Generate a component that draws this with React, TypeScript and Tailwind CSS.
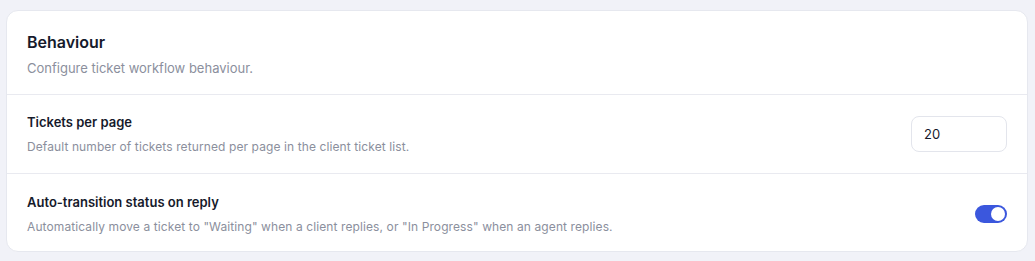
export default function App() {
  return (
    <div
      className="min-h-[261px] w-full bg-[#f1f2f8] pt-[10px] pl-[6px] pr-[7px] pb-[9px]"
      style={{ fontFamily: 'Inter, "Noto Sans", sans-serif' }}
    >
      <div className="rounded-xl border border-[#e6e8ef] bg-white">
        {/* Header */}
        <div className="px-5 pt-[19px] pb-4 border-b border-[#e9eaf0]">
          <h2 className="text-[16px] leading-6 font-semibold text-[#161a2b]">Behaviour</h2>
          <p className="mt-1 text-[13px] leading-5 text-[#8b8f9d]">Configure ticket workflow behaviour.</p>
        </div>

        {/* Tickets per page */}
        <div className="flex items-center justify-between px-5 pt-[17px] pb-[17px] border-b border-[#e9eaf0]">
          <div>
            <div className="text-[13px] leading-5 font-semibold text-[#161a2b]">Tickets per page</div>
            <div className="mt-1.5 text-[12px] leading-[18px] tracking-[0.1px] text-[#8b8f9d]">
              Default number of tickets returned per page in the client ticket list.
            </div>
          </div>
          <input
            type="text"
            defaultValue="20"
            className="h-9 w-[96px] rounded-lg border border-[#e3e5ec] px-3 text-[13px] text-[#161a2b] outline-none"
          />
        </div>

        {/* Auto-transition */}
        <div className="flex items-center justify-between px-5 pt-[18px] pb-[15px]">
          <div>
            <div className="text-[13px] leading-5 font-semibold text-[#161a2b]">Auto-transition status on reply</div>
            <div className="mt-1.5 text-[12px] leading-[18px] tracking-[0.1px] text-[#8b8f9d]">
              Automatically move a ticket to "Waiting" when a client replies, or "In Progress" when an agent replies.
            </div>
          </div>
          <button className="relative h-[18px] w-8 rounded-full bg-[#3b57dd]">
            <span className="absolute right-[2px] top-[2px] h-[14px] w-[14px] rounded-full bg-white" />
          </button>
        </div>
      </div>
    </div>
  )
}
